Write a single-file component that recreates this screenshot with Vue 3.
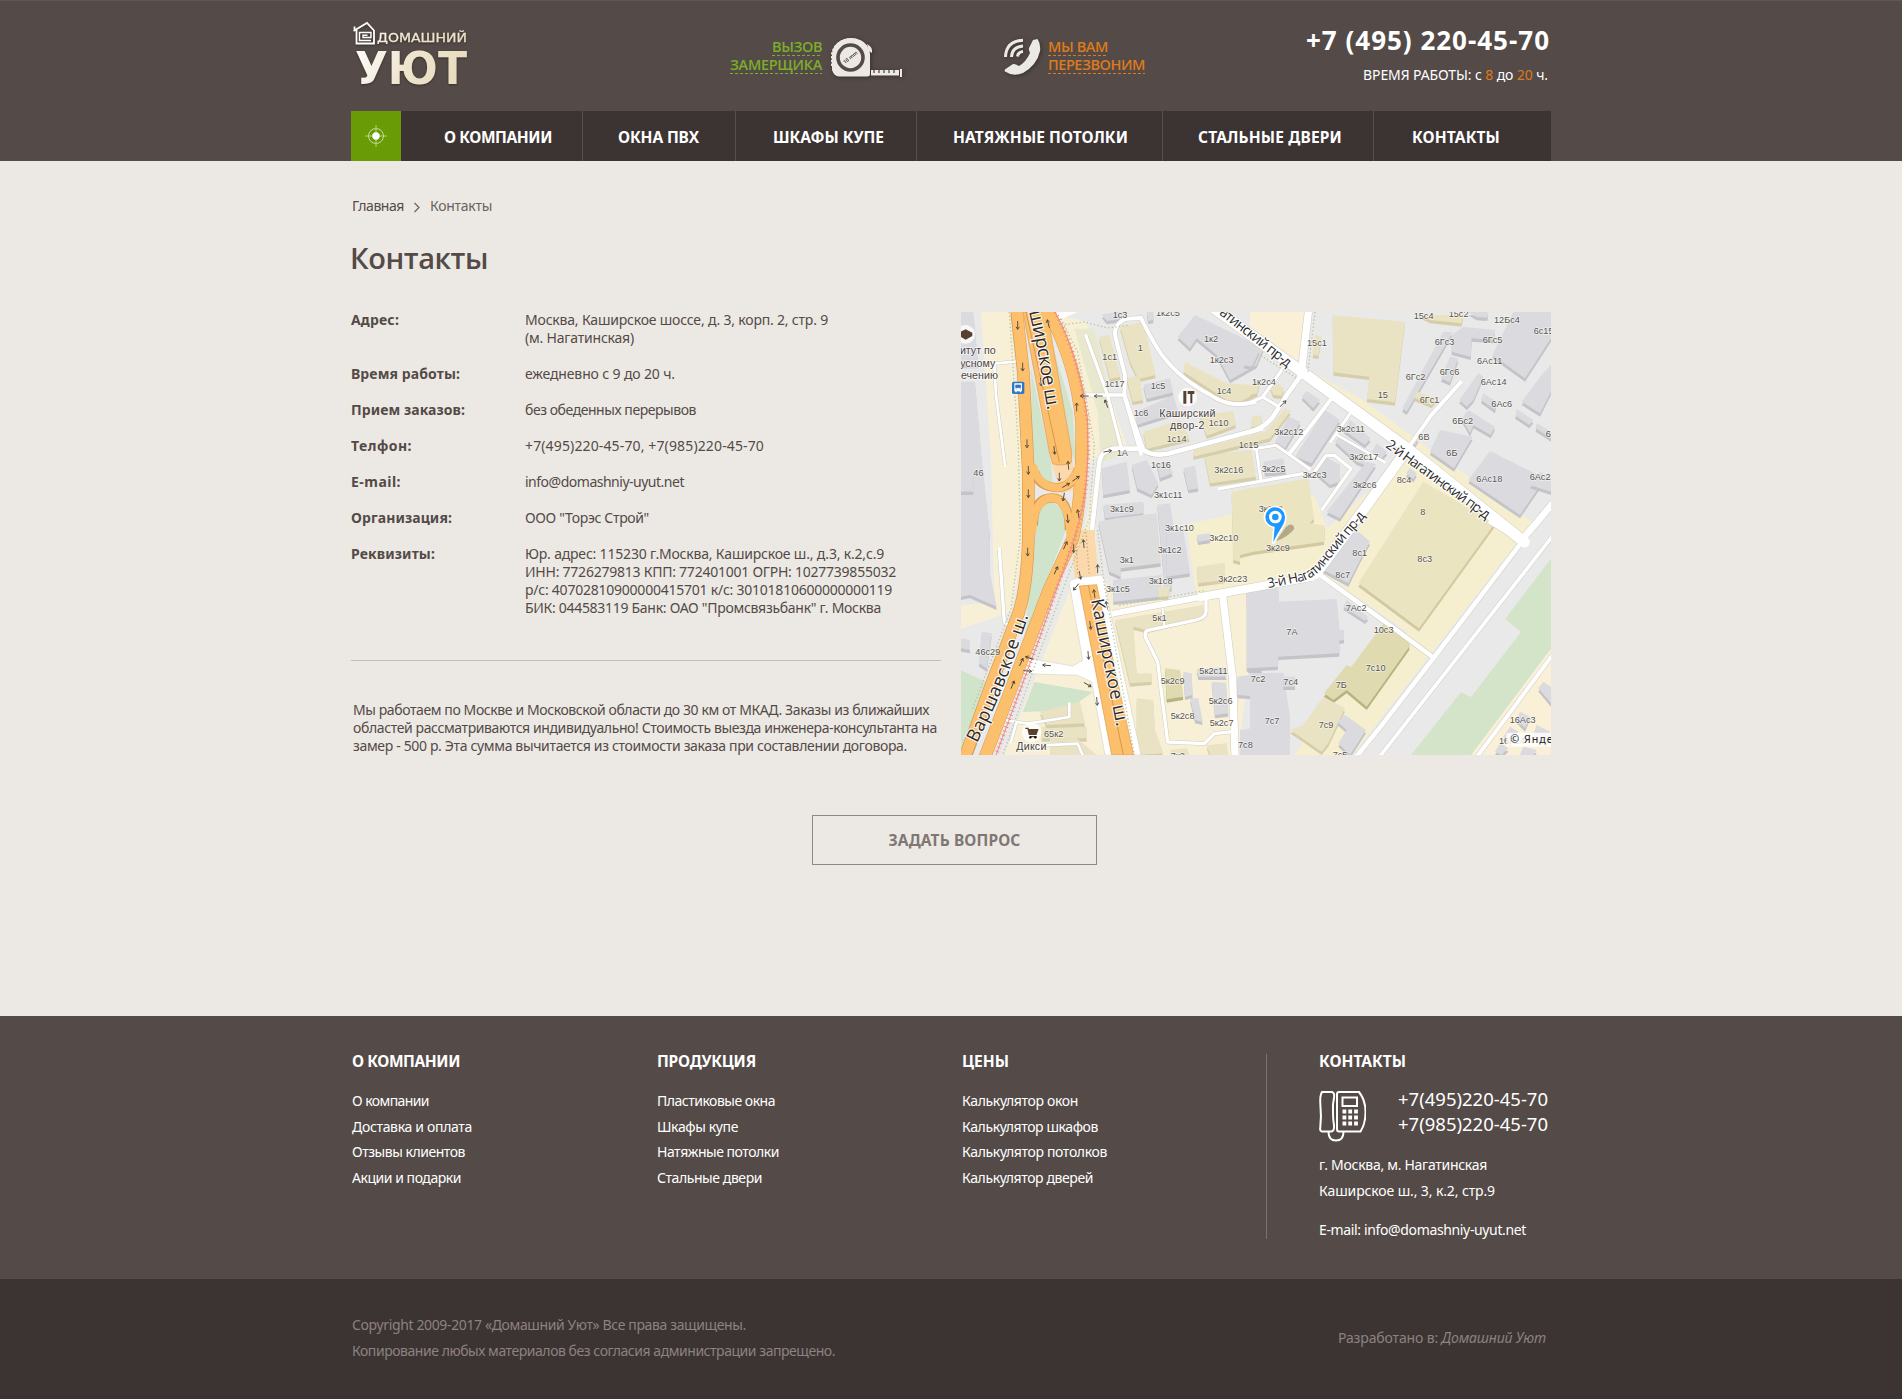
<script setup>
// Spreads the letters of a caption so that it takes the given width in pixels
const vFit = {
  mounted(el, { value }) {
    const width = el.getBoundingClientRect().width
    const count = el.textContent.trim().length
    el.style.letterSpacing = ((value - width) / count).toFixed(3) + 'px'
  },
}

const nav = [
  { title: 'О КОМПАНИИ', w: 181, pad: 43, fit: 108 },
  { title: 'ОКНА ПВХ', w: 153, pad: 35, fit: 81 },
  { title: 'ШКАФЫ КУПЕ', w: 181, pad: 37, fit: 111 },
  { title: 'НАТЯЖНЫЕ ПОТОЛКИ', w: 246, pad: 36, fit: 175 },
  { title: 'СТАЛЬНЫЕ ДВЕРИ', w: 211, pad: 35, fit: 144 },
  { title: 'КОНТАКТЫ', w: 178, pad: 38, fit: 88 },
]

const details = [
  { label: 'Адрес:', fit: 48, lines: [['Москва, Каширское шоссе, д. 3, корп. 2, стр. 9', 303], ['(м. Нагатинская)', 109]] },
  { label: 'Время работы:', fit: 109, lines: [['ежедневно с 9 до 20 ч.', 150]] },
  { label: 'Прием заказов:', fit: 114, lines: [['без обеденных перерывов', 171]] },
  { label: 'Телфон:', fit: 61, lines: [['+7(495)220-45-70, +7(985)220-45-70', 239]] },
  { label: 'E-mail:', fit: 50, lines: [['info@domashniy-uyut.net', 159]] },
  { label: 'Организация:', fit: 101, lines: [['ООО "Торэс Строй"', 124]] },
  {
    label: 'Реквизиты:', fit: 84, lines: [
      ['Юр. адрес: 115230 г.Москва, Каширское ш., д.3, к.2,с.9', 359],
      ['ИНН: 7726279813 КПП: 772401001 ОГРН: 1027739855032', 371],
      ['р/с: 40702810900000415701 к/с: 30101810600000000119', 367],
      ['БИК: 044583119 Банк: ОАО "Промсвязьбанк" г. Москва', 356],
    ],
  },
]

const note = [
  ['Мы работаем по Москве и Московской области до 30 км от МКАД. Заказы из ближайших', 576],
  ['областей рассматриваются индивидуально! Стоимость выезда инженера-консультанта на', 584],
  ['замер - 500 р. Эта сумма вычитается из стоимости заказа при составлении договора.', 554],
]

const columns = [
  { title: 'О КОМПАНИИ', fit: 108, links: [['О компании', 77], ['Доставка и оплата', 120], ['Отзывы клиентов', 113], ['Акции и подарки', 109]] },
  { title: 'ПРОДУКЦИЯ', fit: 99, links: [['Пластиковые окна', 118], ['Шкафы купе', 81], ['Натяжные потолки', 122], ['Стальные двери', 105]] },
  { title: 'ЦЕНЫ', fit: 47, links: [['Калькулятор окон', 116], ['Калькулятор шкафов', 136], ['Калькулятор потолков', 145], ['Калькулятор дверей', 131]] },
]

// Map sheets: each one has its own origin on the 1770 x 1329 map canvas
const sheets = [
  {
    at: 'translate(-33 -21)',
    blocks: [
      ['g', '33,21 70,21 85,180 33,180'], ['g', '33,230 75,230 95,460 120,690 33,690'],
      ['y', '447,95 478,90 512,215 480,222'], ['y', '510,65 580,50 617,210 565,222 540,170'],
      ['y', '530,220 568,214 580,285 548,290'], ['g', '580,240 660,220 670,262 590,282'],
      ['g', '560,320 670,270 685,320 560,360'], ['y', '580,380 690,345 720,400 590,432'],
      ['y', '750,330 850,318 858,360 770,392'], ['y', '705,170 830,235 905,240 925,262 870,290 830,285 700,200'],
      ['g', '683,95 735,30 860,90 940,130 920,180 840,225 800,150 740,100 720,130'],
      ['g', '455,490 530,470 540,555 460,570'], ['g', '545,480 590,465 625,535 605,570 562,550'],
      ['g', '620,475 655,470 668,505 630,520'], ['g', '700,490 735,482 745,550 715,555'],
      ['y', '763,450 905,435 918,515 780,535'], ['g', '460,600 580,590 580,625 465,640'],
      ['g', '622,600 660,595 670,660 665,850 645,850'],
      ['g', '455,28 520,20 530,40 470,48'], ['g', '590,21 610,21 610,45 595,48'],
      ['y', '905,335 935,330 935,365 905,365'], ['g', '33,490 70,490 70,560 33,560'],
      ['e', '445,650 495,640 620,625 632,775 512,790 512,815 478,800'],
    ],
    labels: [
      [70, 512, '46'], [488, 38, '1с3'], [618, 34, '1к2с5'], [457, 165, '1с1'], [563, 138, '1'], [762, 110, '1к2'],
      [779, 173, '1к2с3'], [464, 246, '1с17'], [602, 252, '1с5'], [800, 267, '1с4'], [551, 333, '1с6'],
      [776, 363, '1с10'], [650, 411, '1с14'], [866, 429, '1с15'], [500, 453, '1А'], [603, 489, '1с16'],
      [793, 503, '3к2с16'], [612, 579, '3к1с11'], [480, 621, '3к1с9'], [645, 678, '3к1с10'],
    ],
  },
  {
    at: 'translate(867 -21)',
    blocks: [
      ['y', '248,30 465,50 435,292 350,282 358,215 250,202'], ['y', '195,90 215,95 205,152 188,150'],
      ['g', '0,140 28,140 5,185 -20,180'], ['y', '0,240 30,230 20,265 0,270'],
      ['y', '60,245 85,235 102,250 95,272 70,270'], ['g', '155,275 170,258 210,285 190,310'],
      ['g', '225,315 270,345 185,475 135,455'], ['g', '115,335 152,350 105,430 75,410'],
      ['y', '105,310 122,318 60,400 -170,455 -170,435 45,380'], ['g', '255,410 270,392 345,440 345,480 320,470'],
      ['g', '300,345 362,400 345,420 280,375'], ['g', '380,415 412,440 395,460 365,440'],
      ['g', '350,470 378,478 270,640 230,620'], ['g', '225,455 270,480 270,530 240,540 205,510 200,490'],
      ['g', '40,470 100,460 108,500 45,505'], ['g', '580,80 608,82 470,320 457,310'],
      ['g', '605,90 640,66 735,75 730,105 665,100 662,155 605,140'], ['g', '600,155 625,160 600,232 573,220'],
      ['g', '790,21 903,21 903,100 825,220 727,150'], ['g', '875,210 903,180 903,260 870,325 815,290'],
      ['g', '685,205 700,215 670,285 650,305 628,285'], ['g', '700,265 740,290 735,315 693,285'],
      ['g', '655,315 735,365 722,390 670,360 660,385 635,340'], ['g', '570,375 668,395 612,490 540,440'],
      ['g', '720,438 885,520 810,630 655,525'], ['g', '870,500 903,520 903,560 840,540'],
      ['g', '800,312 850,345 838,360 796,332'], ['g', '860,355 903,380 903,400 857,370'],
      ['y', '510,30 640,30 635,55 540,45'], ['g', '655,21 715,21 712,38 680,36'],
      ['y', '500,260 560,280 545,300 493,278'], ['g', '480,490 500,505 490,522 468,505'],
      ['k', '-55,560 175,520 192,640 180,655 225,662 222,710 10,740 -30,750 -30,770 -50,765'],
      ['g', '490,395 506,400 495,420 480,410'],
    ],
    labels: [
      [171, 122, '15с1'], [6, 239, '1к2с4'], [383, 279, '15'], [491, 41, '15с4'], [596, 35, '15с2'], [732, 53, '12Бс4'],
      [851, 86, '6с15'], [554, 119, '6Гс3'], [698, 113, '6Гс5'], [681, 176, '6Ас11'], [569, 210, '6Гс6'],
      [467, 225, '6Гс2'], [692, 239, '6Ас14'], [509, 294, '6Гс1'], [724, 305, '6Ас6'], [607, 357, '6Бс2'], [505, 405, '6В'],
      [589, 453, '6Б'], [73, 390, '3к2с12'], [260, 381, '3к2с11'], [298, 465, '3к2с17'], [35, 501, '3к2с5'],
      [158, 519, '3к2с3'], [308, 549, '3к2с6'], [440, 534, '8с4'], [679, 530, '6Ас18'], [839, 525, '6Ас2'],
      [511, 630, '8'], [26, 620, '3к2с8'], [887, 395, '6Ас'],
    ],
  },
  {
    at: 'translate(-33 654)',
    blocks: [
      ['g', '33,0 118,0 120,130 140,230 60,195 33,200'], ['g', '95,305 125,310 110,415 87,400'],
      ['g', '33,325 60,330 60,360 33,355'],
      ['g', '650,0 700,0 720,130 650,140'], ['g', '490,150 635,135 630,200 490,215'],
      ['y', '740,110 825,98 825,150 745,160'], ['y', '625,170 660,170 655,200 625,200'],
      ['y', '495,270 760,225 760,260 590,300 550,290 560,430 605,430 605,455 540,460'],
      ['d', '645,415 690,420 700,500 650,508'], ['g', '700,425 725,430 728,495 705,500'],
      ['g', '740,418 820,412 830,440 745,440'], ['g', '785,455 828,458 835,550 795,555'],
      ['g', '720,505 745,505 758,575 735,570'], ['y', '275,590 410,590 410,625 275,625'],
      ['y', '560,505 610,510 615,600 640,670 560,675'], ['g', '890,180 935,180 935,420 895,420'],
      ['g', '862,440 935,430 935,500 862,495'], ['g', '870,600 935,590 935,675 870,675'],
      ['g', '740,15 780,10 780,30 745,35'],
      ['y', '270,545 390,515 405,580 290,585'], ['y', '300,625 380,625 440,675 300,675'],
      ['y', '660,660 710,655 720,675 660,675'], ['y', '770,645 830,640 835,675 780,675'],
    ],
    labels: [
      [76, 376, '46с29'], [509, 99, '3к1'], [623, 70, '3к1с2'], [778, 33, '3к2с10'], [596, 162, '3к1с8'],
      [805, 156, '3к2с23'], [468, 187, '3к1с5'], [607, 273, '5к1'], [748, 432, '5к2с11'], [632, 462, '5к2с9'],
      [776, 522, '5к2с6'], [662, 567, '5к2с8'], [779, 588, '5к2с7'], [864, 655, '7с8'], [282, 620, '65к2'],
      [662, 688, '7к2'],
    ],
  },
  {
    at: 'translate(867 654)',
    blocks: [
      ['k', '520,-145 735,-20 507,295 325,160'],
      ['g', '-10,182 85,175 85,215 260,207 268,300 282,300 282,330 268,332 268,370 85,380 83,410 -10,415'],
      ['g', '0,430 100,428 120,560 120,675 0,675'], ['g', '100,440 135,440 135,470 100,470'],
      ['g', '270,10 320,0 360,35 330,90 295,160 220,120'], ['g', '290,210 355,262 345,272 280,230'],
      ['d', '405,275 478,332 478,350 350,530 290,480 250,510 222,490 290,405 303,412'],
      ['y', '220,500 285,535 235,640 215,665 150,620 120,600 160,585'],
      ['g', '285,555 348,600 300,675 265,640 290,600 262,575'],
      ['g', '880,455 903,470 903,520 865,475'], ['g', '810,545 840,560 825,595 800,570'],
      ['g', '780,590 805,605 780,640 760,620'], ['g', '860,585 900,605 890,640 850,615'],
      ['g', '750,640 775,655 755,675 735,665'], ['g', '820,650 860,660 850,675 810,675'],
    ],
    labels: [
      [48, 63, '3к2с9'], [307, 79, '8с1'], [502, 97, '8с3'], [256, 144, '8с7'], [287, 243, '7Ас2'], [109, 315, '7А'],
      [371, 309, '10с3'], [347, 423, '7с10'], [257, 475, '7Б'], [100, 465, '7с4'], [2, 456, '7с2'], [44, 582, '7с7'],
      [206, 594, '7с9'], [779, 579, '16Ас3'], [747, 641, '16Ас4'], [248, 685, '7с5'],
    ],
  },
]

const roads = [
  ['M375 72 L440 250 L480 405', 10], ['M355 249 H490', 10], ['M540 425 L490 250 L492 190 L462 70 Q460 30 500 20 L540 18 Q560 60 590 110 Q640 190 750 250 Q810 290 880 270', 12],
  ['M490 250 L548 415', 12],
  ['M395 800 L392 660 L415 450 Q420 415 460 410 L540 410 Q580 440 640 420 L900 350', 14],
  ['M168 148 L100 155 L105 250 L132 460', 8], ['M776 530 L1030 484', 10], ['M886 410 L899 500 M880 410 L945 400 L1045 470', 9],
  ['M1042 0 L1020 190', 22], ['M1020 190 L980 245 L945 300 Q920 345 867 360', 14], ['M965 170 L905 255 L867 272 M905 255 L955 285', 10],
  ['M1110 262 L985 425', 12], ['M1165 308 L1110 388', 9], ['M1130 370 L1270 450', 8], ['M1085 590 L1170 470 L1120 430 L1095 430 L1060 480', 10],
  ['M1498 212 L1410 310 L1340 410', 12], ['M115 712 L130 930 L150 945', 10],
  ['M735 850 V900 Q735 918 700 925 L560 955 Q550 960 553 975 L590 1050 L620 1290 L730 1295 L760 1265 L820 1258', 10], ['M605 890 L610 940', 6],
  ['M785 850 L815 1100 L822 1329', 22], ['M455 905 L720 855', 18], ['M720 855 L1050 795', 24], ['M130 1224 L200 1235 L325 1215 V1175 M165 1235 L150 1290 M240 1300 L350 1295 L365 1329', 8],
  ['M1065 780 L1280 935 L1415 1035', 14], ['M1690 680 L1420 1035 L1250 1255 L1190 1329', 14], ['M1800 640 L1260 1329', 11],
  ['M1800 995 L1540 1345', 12], ['M1800 545 L1690 675', 20], ['M1590 630 L1690 690', 16],
]

const arrows = [
  [170, 40, 90], [185, 165, 90], [240, 210, 85], [262, 35, -105], [198, 395, 90], [202, 475, 90], [202, 545, 90], [280, 415, 85],
  [347, 285, -90], [295, 495, 90], [322, 460, -95], [345, 500, -35], [315, 520, -30], [308, 555, 100], [320, 620, 85],
  [352, 605, -100], [370, 252, 180], [412, 252, 180], [436, 275, -110], [440, 418, -10], [966, 275, -45],
  [200, 720, 90], [313, 700, -65], [285, 775, -65], [338, 710, 90], [368, 695, -95], [357, 790, 80], [345, 825, 130], [410, 770, -90],
  [400, 845, -98], [388, 940, 82], [437, 880, -100], [382, 1030, 85], [181, 1050, -65], [205, 1038, -160], [200, 1077, 5],
  [257, 1060, 185], [380, 1118, 30], [408, 1168, 85], [155, 1118, -68],
]
</script>

<template>
  <div class="page">
    <header class="header">
      <div class="wrap">
        <div class="top">
          <svg class="logo" width="120" height="72" viewBox="0 0 120 72">
            <defs>
              <linearGradient id="cream" x1="0" y1="0" x2="1" y2="0.25">
                <stop offset="0" stop-color="#fff" /><stop offset=".55" stop-color="#efe4cd" /><stop offset="1" stop-color="#e9dcc0" />
              </linearGradient>
            </defs>
            <g fill="none" stroke="#fff" stroke-width="1.8">
              <path d="M2.500 13 L16 5 L23 12.500 V25.500 H5.500 V12 M3.500 8.500 V12" />
              <path d="M20 22.500 H8.500 V14.500 H20 V19.500 H12 V17.200 H16.500" stroke-width="1.400" />
            </g>
            <g fill="url(#cream)" font-family="'DejaVu Sans', sans-serif">
              <text x="26" y="23.500" font-size="13" textLength="90" lengthAdjust="spacingAndGlyphs" stroke="#efe4cd" stroke-width=".3">ДОМАШНИЙ</text>
              <text x="4" y="66" font-size="44" font-weight="bold" textLength="112" lengthAdjust="spacingAndGlyphs">УЮТ</text>
            </g>
          </svg>
          <a class="call green">
            <span class="call-text"><span class="line"><span v-fit="50">ВЫЗОВ</span></span><span class="line"><span v-fit="92">ЗАМЕРЩИКА</span></span></span>
            <svg width="74" height="42" viewBox="0 0 74 42">
              <path d="M2 34 V18 A19 17 0 0 1 21 2 A19 17 0 0 1 40 18 V38 Q40 40.500 37 40.500 H9 Q4 40 2 34" fill="#ece8e3" />
              <path d="M2 30 V18 A19 17 0 0 1 36 10" fill="none" stroke="#ece8e3" stroke-width="2" stroke-dasharray="2.500 1.300" />
              <path d="M37 8 Q43 11 42 17 L39 15" fill="#ece8e3" />
              <circle cx="20.500" cy="21.500" r="12.500" fill="none" stroke="#544a47" stroke-width="3.600" />
              <text x="20.500" y="23" font-size="5" font-weight="bold" fill="#544a47" text-anchor="middle" transform="rotate(-40 20.500 21.500)">10 mm</text>
              <path d="M41 34 H69 V39.500 H41z M70 33 H72 V41 H70z" fill="#ece8e3" />
              <path d="M44 34v3M49 34v3M54 34v3M59 34v3M64 34v3" stroke="#544a47" stroke-width="1.300" />
            </svg>
          </a>
          <a class="call orange">
            <svg width="40" height="40" viewBox="0 0 40 40">
              <path d="M31 3 L35.500 2 Q39 7 38 14 Q35 28 21 36 Q11 40 3 34.500 Q2 33 3.500 32 L11 27 Q13 26.500 17 29 Q24 25 28 16 Q26.500 13 27 11z" fill="#ece8e3" />
              <g fill="none" stroke="#ece8e3" stroke-width="3">
                <path d="M3.500 20 Q4 4 21 3.200" /><path d="M9.500 20 Q10 10 21 9" /><path d="M15.500 19.500 Q16 15 21 14.500" />
              </g>
            </svg>
            <span class="call-text"><span class="line"><span v-fit="60">МЫ ВАМ</span></span><span class="line"><span v-fit="97">ПЕРЕЗВОНИМ</span></span></span>
          </a>
          <div class="phone">
            <div class="number"><span v-fit="244">+7 (495) 220-45-70</span></div>
            <div class="hours"><span v-fit="185">ВРЕМЯ РАБОТЫ: с <b>8</b> до <b>20</b> ч.</span></div>
          </div>
        </div>
        <nav class="nav">
          <a class="home">
            <svg width="24" height="24" viewBox="0 0 24 24">
              <circle cx="12" cy="12" r="7.500" fill="none" stroke="#cfe3ab" stroke-width=".9" />
              <path d="M12 1v22M1 12h22" stroke="#b5d582" stroke-width="1" />
              <circle cx="12" cy="12" r="3.700" fill="#fff" />
            </svg>
          </a>
          <a v-for="n in nav" :key="n.title" class="item" :style="{ width: n.w + 'px', paddingLeft: n.pad + 'px' }"><span v-fit="n.fit">{{ n.title }}</span></a>
        </nav>
      </div>
    </header>

    <main class="main wrap">
      <div class="crumbs">
        <a><span v-fit="52">Главная</span></a>
        <svg width="8" height="11" viewBox="0 0 8 11"><path d="M1.500 1 L6 5.500 L1.500 10" fill="none" stroke="#6b625f" stroke-width="1.200" /></svg>
        <span v-fit="62">Контакты</span>
      </div>
      <h1><span v-fit="138">Контакты</span></h1>
      <div class="content">
        <section class="info">
          <dl>
            <div v-for="d in details" :key="d.label" class="row">
              <dt><span v-fit="d.fit">{{ d.label }}</span></dt>
              <dd><div v-for="l in d.lines" :key="l[0]"><span v-fit="l[1]">{{ l[0] }}</span></div></dd>
            </div>
          </dl>
          <div class="note"><div v-for="l in note" :key="l[0]"><span v-fit="l[1]">{{ l[0] }}</span></div></div>
        </section>

        <svg class="map" width="590" height="443" viewBox="0 0 1770 1329" preserveAspectRatio="none">
          <rect width="1770" height="1329" fill="#e9e9e9" />
          <!-- land -->
          <g fill="#f7f0d6">
            <path d="M60 0H150L200 650 L150 900 L0 950 V880 L100 870 L90 440z" />
            <path d="M270 0 L375 30 L500 410 L395 440 L410 800 L900 800 L830 1329 H130 L340 800 L400 500z" />
            <path d="M867 60 V0 H1035 L1010 160z" fill="#faf0d8" />
            <path d="M1035 170 L1200 260 L1460 450 L1770 670 L1420 1100 L1240 1329 H1000 L1180 1060 L1340 960 L1080 780 L700 870 L670 640 L1060 550 L1100 650 L1340 430z" fill="#f5efd0" />
            <path d="M1770 1000 V1329 H1530z" fill="#faf0d8" />
          </g>
          <path d="M405 450 L660 500 L705 850 L470 880 L410 750z" fill="#e9e9e9" />
          <path d="M1320 1329 L1770 740 V1010 L1530 1329z" fill="#d3e4c9" />
          <path d="M1175 1329 L1770 560 V720 L1625 915 L1680 960 L1530 1155 L1500 1140 L1350 1329z" fill="#e9e9e9" />
          <g fill="#d0e3cb">
            <path d="M210 170 L270 450 L275 515 L230 505 L215 440z M280 120 L335 300 L345 460 L330 410z" />
            <path d="M218 700 L232 585 L270 570 L305 590 L312 660 L190 985z" />
            <path d="M185 1200 L220 1110 L395 1140 L320 1195z" />
            <path d="M0 1075 L75 1110 L55 1205 L0 1310z" />
          </g>
          <path d="M340 50 L400 50 L490 430 L420 450 L410 300z" fill="#e8e8cf" />
          <!-- houses -->
          <g v-for="s in sheets" :key="s.at" :transform="s.at">
            <g v-for="b in s.blocks" :key="b[1]" :class="'house ' + b[0]">
              <polygon class="side" :points="b[1]" transform="translate(0 10)" /><polygon class="roof" :points="b[1]" />
            </g>
          </g>
          <!-- streets -->
          <g fill="none" stroke="#cfccc2" stroke-linejoin="round">
            <path v-for="r in roads" :key="r[0]" :d="r[0]" :stroke-width="r[1] + 3" />
            <path d="M720 -40 L1030 185 L1340 410 L1690 690" stroke-width="36" /><path d="M1340 410 L1210 590 L1065 785" stroke-width="34" />
          </g>
          <g fill="none" stroke="#fff" stroke-linejoin="round" stroke-linecap="round">
            <path v-for="r in roads" :key="r[0]" :d="r[0]" :stroke-width="r[1]" />
            <path d="M720 -40 L1030 185 L1340 410 L1690 690" stroke-width="33" /><path d="M1340 410 L1210 590 L1065 785" stroke-width="31" />
          </g>
          <!-- highways -->
          <path d="M270 0 L350 0 L280 30z" fill="#fff" />
          <path d="M272 455 L335 450 L345 530 L300 545z M335 740 L350 654 H400 L412 790 L342 805z" fill="#fbd9ac" />
          <path d="M325 815 Q325 800 355 797 L415 790 Q430 790 432 810 L445 885 L540 1329 H432 L392 1110 L350 1090 L185 1085 L200 1038 L335 1062 L365 1045z" fill="#fff" stroke="#d8d4c8" stroke-width="2" />
          <g fill="none" stroke="#dc9a50">
            <path d="M167 0 L187 180 L202 480 V680 Q198 830 172 905 L90 1120 L10 1340" stroke-width="38" />
            <path d="M262 0 Q345 150 362 330 Q365 560 335 680 L265 830 L70 1340" stroke-width="38" />
            <path d="M222 480 Q232 525 290 527 Q335 525 352 470 M217 640 Q218 560 270 558 Q325 555 325 655" stroke-width="28" />
            <path d="M186 0 L258 0 L332 420 V450 Q310 465 275 455 L265 420z" fill="#fcbf6c" stroke-width="2" />
          </g>
          <g fill="none" stroke="#fcbf6c">
            <path d="M167 -9 L187 180 L202 480 V680 Q198 830 172 905 L90 1120 L10 1340" stroke-width="34" />
            <path d="M258 -9 Q345 150 362 330 Q365 560 335 680 L265 830 L70 1340" stroke-width="35" />
            <path d="M215 460 Q232 525 290 527 Q335 525 356 460 M213 665 Q218 560 270 558 Q328 555 329 690" stroke-width="24" />
          </g>
          <path d="M355 822 L407 818 L518 1329 H452z" fill="#fcbf6c" stroke="#dc9a50" stroke-width="2" />
          <path d="M382 820 L487 1329 M195 0 L295 450 M80 1210 L34 1329" fill="none" stroke="#c9853d" stroke-width="2" />
          <!-- tramway and paths -->
          <g fill="none" stroke="#f28c86">
            <path d="M282 0 Q355 130 380 330 Q390 520 345 665 L237 974 L105 1329" stroke-width="3" />
            <path d="M282 0 Q355 130 380 330 Q390 520 345 665 L237 974 L105 1329" stroke-width="12" stroke-dasharray="3 10" />
          </g>
          <g fill="none" stroke="#b5c79b" stroke-width="4" stroke-dasharray="4 7">
            <path d="M145 0 L172 400 L178 680 L150 890 L35 1190" /><path d="M300 20 L350 120 L400 400 L385 620 L240 1010 L125 1329" />
            <path d="M290 40 L370 30 L440 48 L500 40" /><path d="M410 654 L430 820 L520 1329" /><path d="M1062 0 L1040 185 M890 125 L1010 200" />
            <path d="M475 880 L735 835" /><path d="M345 660 L350 790 M375 660 L385 790" stroke="#c9a878" />
          </g>
          <g v-for="(a, i) in arrows" :key="i" :transform="`translate(${a[0]} ${a[1]}) rotate(${a[2]})`">
            <path d="M-13 0H12M4 -5L12 0L4 5" fill="none" stroke="#4b443e" stroke-width="2.600" />
          </g>
          <!-- captions -->
          <g v-for="s in sheets" :key="s.at" :transform="s.at" class="num">
            <text v-for="l in s.labels" :key="l[2] + l[0]" :x="l[0]" :y="l[1]">{{ l[2] }}</text>
          </g>
          <g class="place">
            <text x="-18" y="127">титут по</text><text x="-20" y="165">русному</text><text x="0" y="202">ечению</text>
            <text x="595" y="314" textLength="168">Каширский</text><text x="627" y="350" textLength="103">двор-2</text><text x="166" y="1314" textLength="90">Дикси</text>
          </g>
          <defs>
            <path id="kash-top" d="M190 -60 L225 90 L262 310" /><path id="kash" d="M390 864 L470 1260" />
            <path id="vars" d="M48 1294 Q120 1150 150 1062 L215 875" /><path id="nag1" d="M722 -34 L1005 188" />
            <path id="nag2" d="M1272 404 L1590 634" /><path id="nag3" d="M922 828 L1030 806 Q1066 795 1100 748 L1240 580" />
          </defs>
          <g class="street">
            <text font-size="56"><textPath href="#kash-top" textLength="362">Каширское ш.</textPath></text>
            <text font-size="54"><textPath href="#kash" textLength="388">Каширское ш.</textPath></text>
            <text font-size="54"><textPath href="#vars" textLength="412">Варшавское ш.</textPath></text>
            <text font-size="42"><textPath href="#nag1" textLength="326">Нагатинский пр-д</textPath></text>
            <text font-size="42"><textPath href="#nag2" textLength="374">2-й Нагатинский пр-д</textPath></text>
            <text font-size="41"><textPath href="#nag3" textLength="380">3-й Нагатинский пр-д</textPath></text>
          </g>
          <!-- markers -->
          <rect x="153" y="209" width="37" height="37" rx="5" fill="#2f76c4" />
          <path d="M162 216h19v20h-19z M165 236v5M178 236v5" fill="#fff" stroke="#fff" stroke-width="4" /><path d="M164 219h15v8h-15z M164 231h3M176 231h3" fill="#2f76c4" stroke="#2f76c4" stroke-width="2" />
          <circle cx="14" cy="67" r="28" fill="#fff" opacity=".8" /><path d="M-8 62L14 52L34 62V72L14 83L-5 72z" fill="#57402f" />
          <circle cx="680" cy="255" r="28" fill="#fff" opacity=".8" /><path d="M667 237h9v38h-9z M680 237h20v9h-6v28h-6v-28h-8z" fill="#57402f" />
          <circle cx="212" cy="1261" r="29" fill="#fff" opacity=".8" /><path d="M193 1249h8l4 18h20l5-14h-26M207 1274h20" fill="#57402f" stroke="#57402f" stroke-width="4" /><circle cx="208" cy="1276" r="3.500" /><circle cx="223" cy="1276" r="3.500" />
          <path d="M944 688 L975 645 Q995 628 1000 650 Q985 672 944 688" fill="#6b6244" opacity=".45" />
          <path d="M943 581a34 34 0 0 1 34 34c0 26-19 38-35 80l-10 0 4-48c-17-4-28-16-28-33a34 34 0 0 1 35-33z" fill="#fff" />
          <path d="M943 586a29 29 0 0 1 29 29c0 24-17 35-35 76l4-47a29 29 0 0 1 2-58z" fill="#1e98ff" /><circle cx="943" cy="615" r="19" fill="#fff" /><circle cx="943" cy="615" r="10" fill="#1e98ff" />
          <rect x="1636" y="1262" width="140" height="42" rx="6" fill="#fff" opacity=".8" />
          <text x="1648" y="1294" class="copy" textLength="165">© Яндекс</text>
        </svg>
      </div>
      <a class="ask"><span v-fit="132">ЗАДАТЬ ВОПРОС</span></a>
    </main>

    <footer class="footer">
      <div class="wrap cols">
        <div v-for="c in columns" :key="c.title" class="col">
          <h4><span v-fit="c.fit">{{ c.title }}</span></h4>
          <a v-for="l in c.links" :key="l[0]"><span v-fit="l[1]">{{ l[0] }}</span></a>
        </div>
        <div class="contacts">
          <h4><span v-fit="87">КОНТАКТЫ</span></h4>
          <div class="tel">
            <svg width="48" height="52" viewBox="0 0 48 52" fill="none" stroke="#fff" stroke-width="2">
              <path d="M4 2H14Q17 3 16 8Q14.500 14 15 21Q15 30 16 35Q16.500 41 13.500 41.500H4Q1.500 41 2.300 37Q3.500 26 2.500 17Q1.500 5 4 2z" />
              <path d="M21 2H41Q47.500 10 47.500 22Q47.500 34 42.500 41.500H21Q19 41.500 19 39V4Q19 2 21 2z" />
              <path d="M10.500 42Q10.500 50.500 18 50.500Q25.500 50.500 25.500 42" /><path d="M24.500 7.500H39V16H24.500z" />
              <path d="M24.500 21.500H40M24.500 27.500H40M24.500 33.500H40" stroke-width="4" stroke-dasharray="3.800 2" />
            </svg>
            <div class="nums"><span v-fit="147">+7(495)220-45-70</span><span v-fit="147">+7(985)220-45-70</span></div>
          </div>
          <p><span v-fit="168">г. Москва, м. Нагатинская</span></p>
          <p><span v-fit="176">Каширское ш., 3, к.2, стр.9</span></p>
          <p class="mail"><span v-fit="207">E-mail: info@domashniy-uyut.net</span></p>
        </div>
      </div>
      <div class="bottom">
        <div class="wrap">
          <div>
            <p><span v-fit="394">Copyright 2009-2017 «Домашний Уют» Все права защищены.</span></p>
            <p><span v-fit="483">Копирование любых материалов без согласия администрации запрещено.</span></p>
          </div>
          <p class="dev"><span v-fit="208">Разработано в: <i>Домашний Уют</i></span></p>
        </div>
      </div>
    </footer>
  </div>
</template>

<style>
body { margin: 0; background: #ece8e3; }
</style>

<style scoped>
.page { height: 1399px; display: flex; flex-direction: column; font: 14px/18px "Noto Sans", sans-serif; color: #544a47; background: #ece9e4; overflow: hidden; }
.page * { box-sizing: border-box; }
span { white-space: nowrap; }
h1, h4, p, dl, dd { margin: 0; }
.wrap { width: 1200px; margin: 0 auto; }
.header { height: 161px; background: #544a47; border-top: 1px solid #5f5552; }
.top { height: 110px; display: flex; }
.logo { margin-top: 17px; filter: drop-shadow(0 1px 1px rgba(0, 0, 0, .35)); }
.call { display: flex; font: 600 14.500px/18px "Open Sans", sans-serif; }
.call-text { display: flex; flex-direction: column; padding-top: 37px; }
.line { height: 18px; background: repeating-linear-gradient(90deg, currentColor 0 3px, transparent 3px 5px) 0 100% / 100% 1px no-repeat; line-height: 17px; }
.call svg { margin-top: 35px; filter: drop-shadow(1px 1px 2px rgba(0, 0, 0, .35)); }
.green { color: #7bad2a; margin-left: 258px; width: 262px; }
.green .call-text { align-items: flex-end; width: 93px; }
.green svg { margin-left: 8px; }
.orange { color: #dd7a1c; width: 200px; margin-left: 11px; }
.orange svg { margin-top: 36px; }
.orange .call-text { align-items: flex-start; margin-left: 6px; }
.phone { flex: 1; color: #fff; text-align: right; }
.number { font-size: 26px; line-height: 30px; font-weight: bold; margin: 24px 1px 0 0; }
.hours { margin: 11px 3px 0 0; }
.hours b { font-weight: normal; color: #dd7a1c; }
.nav { display: flex; height: 50px; background: #3c3333; color: #fff; font-weight: bold; font-size: 15.500px; line-height: 53px; }
.home { width: 50px; background: #689b06; display: flex; align-items: center; justify-content: center; }
.item + .item { border-left: 1px solid #594f4d; }
.main { height: 855px; display: flex; flex-direction: column; }
.crumbs { display: flex; align-items: center; margin: 36px 0 0 1px; height: 18px; }
.crumbs svg { margin: 2px 9px 0 9px; }
.crumbs > span { color: #6b625f; }
.crumbs a { width: 52px; }
h1 { font: 600 29px/36px "Open Sans", sans-serif; margin: 25px 0 0 -1px; }
.content { display: flex; justify-content: space-between; margin-top: 36px; height: 443px; }
.info { width: 590px; }
.row { display: flex; margin-bottom: 18px; }
dt { width: 174px; font-weight: bold; }
dl { height: 350px; border-bottom: 1px solid #c3bfbb; margin-top: -1px; }
.note { margin: 40px 0 0 2px; }
.ask { width: 285px; height: 50px; margin: 60px 0 0 461px; border: 1px solid #8f8784; color: #7f7774; font-weight: bold; font-size: 15.500px; line-height: 49px; text-align: center; }
.footer { flex: 1; background: #544a47; color: #fff; display: flex; flex-direction: column; }
.cols { display: flex; height: 263px; padding: 38px 0 0 1px; }
.col { width: 305px; display: flex; flex-direction: column; }
.col a { height: 25.700px; }
h4 { font-size: 15.500px; line-height: 18px; height: 35px; position: relative; top: -2px; }
.col h4 { height: 38px; }
.contacts { height: 185px; border-left: 1px solid #7b716e; padding-left: 52px; margin-left: -1px; }
.tel { display: flex; margin-bottom: 14px; }
.tel svg { margin: 1px 0 0 -1px; }
.nums { display: flex; flex-direction: column; font-size: 18.500px; line-height: 25px; margin: -3px 0 0 32px; width: 147px; }
.contacts p { height: 26px; }
.contacts .mail { margin-top: 13px; }
.bottom { flex: 1; background: #3c3333; color: #8c8280; }
.bottom .wrap { display: flex; justify-content: space-between; padding: 33px 5px 0 1px; line-height: 26px; }
.dev { margin-top: 13px; }
.map { display: block; overflow: hidden; }
.house .roof { fill: #dadadf; }
.house .side { fill: #c3c3c8; }
.house.y .roof { fill: #e9e3c4; }
.house.y .side { fill: #d6ceab; }
.house.k .roof { fill: #ebe4c1; }
.house.k .side { fill: #d3c9a1; }
.house.e .roof { fill: #dddddd; }
.house.e .side { fill: #c2c2c2; }
.house.d .roof { fill: #e0dab0; }
.house.d .side { fill: #b9b283; }
.num { font: 27.500px "Liberation Sans", sans-serif; fill: #57534c; stroke: rgba(255, 255, 255, .6); stroke-width: 4px; paint-order: stroke; }
.place { font: 32px "Liberation Sans", sans-serif; fill: #4b443e; stroke: rgba(255, 255, 255, .7); stroke-width: 5px; paint-order: stroke; }
.street { font-family: "Open Sans", sans-serif; fill: #2b2b2b; stroke: rgba(255, 255, 255, .85); stroke-width: 7px; paint-order: stroke; }
.copy { font: 32px "Noto Sans", sans-serif; fill: #222; }
</style>
